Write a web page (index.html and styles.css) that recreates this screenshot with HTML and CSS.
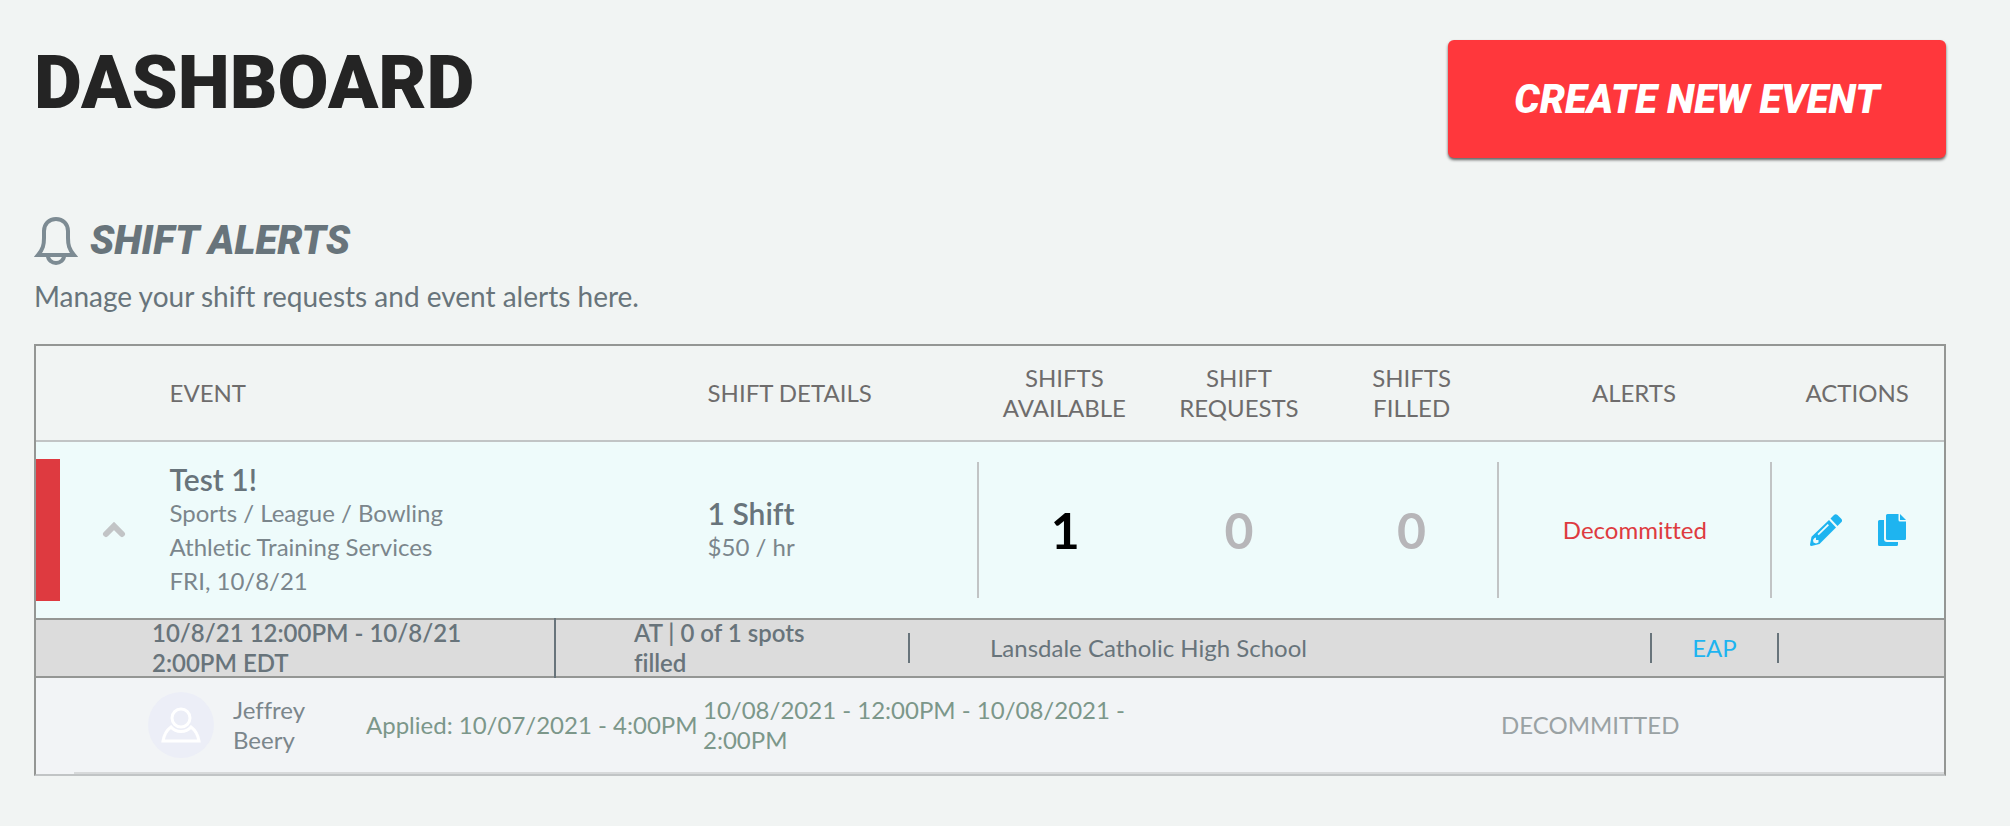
FILE: index.html
```
<!DOCTYPE html>
<html lang="en">
<head>
  <meta charset="UTF-8" />
  <title>Dashboard</title>
  <link rel="stylesheet" href="styles.css">
</head>
<body>
  <div class="page">
    <header class="page-header">
      <h1>DASHBOARD</h1>
      <button class="create-btn" type="button">CREATE NEW EVENT</button>
    </header>

    <section class="alerts">
      <h2>
        <svg class="bell" viewBox="0 0 44 48" fill="none" stroke="#7d8b93" stroke-width="4">
          <path d="M4 38 C9 32 10 28 10 21 V14 C10 7 15 2 22 2 S34 7 34 14 V21 C34 28 35 32 40 38 Z" />
          <path d="M14 39 C14 43 18 46 22 46 S30 43 30 39" />
        </svg>
        SHIFT ALERTS
      </h2>
      <p class="intro">Manage your shift requests and event alerts here.</p>

      <table class="shifts">
        <colgroup>
          <col class="col-toggle"><col class="col-event"><col class="col-details">
          <col class="col-available"><col class="col-requests"><col class="col-filled">
          <col class="col-alerts"><col class="col-actions">
        </colgroup>
        <thead>
          <tr>
            <th></th>
            <th class="left">EVENT</th>
            <th class="left">SHIFT DETAILS</th>
            <th>SHIFTS<br>AVAILABLE</th>
            <th>SHIFT<br>REQUESTS</th>
            <th>SHIFTS<br>FILLED</th>
            <th>ALERTS</th>
            <th>ACTIONS</th>
          </tr>
        </thead>
        <tbody>
          <tr class="event-row">
            <td>
              <div class="flag-cell">
                <span class="flag"></span>
                <button class="icon-btn toggle" type="button" aria-label="Collapse">
                  <svg width="24" height="16" viewBox="0 0 24 16" fill="none" stroke="#c2c4c6" stroke-width="6" stroke-linecap="round"><path d="M4 12 L12 4 L20 12" /></svg>
                </button>
              </div>
            </td>
            <td class="left">
              <div class="title">Test 1!</div>
              <div>Sports / League / Bowling</div>
              <div>Athletic Training Services</div>
              <div>FRI, 10/8/21</div>
            </td>
            <td class="left">
              <div class="title">1 Shift</div>
              <div>$50 / hr</div>
            </td>
            <td><div class="cell divided count has-shifts">1</div></td>
            <td><div class="cell count">0</div></td>
            <td><div class="cell count">0</div></td>
            <td><div class="cell divided alert">Decommitted</div></td>
            <td>
              <div class="cell divided actions">
                <button class="icon-btn" type="button" aria-label="Edit">
                  <svg width="32" height="32" viewBox="0 0 32 32" fill="#1eb4f0">
                    <path d="M20.500 4.500 L24 1 Q25.500 -.5 27.500 1 L31 4.500 Q33 6.500 31.500 8 L27.500 12 Z" />
                    <path fill-rule="evenodd" d="M19 6 L26 13.500 L9.500 30 L1.500 32 Q0 32 0 30.500 L1.500 22.800 Z M7.500 20 L8.700 21.200 L19 11.300 L17.700 10 Z M4.500 24 L3 26 L3.500 28.500 L6 29.500 L8.500 28.500 V26 H6 V23.500 Z" />
                  </svg>
                </button>
                <button class="icon-btn" type="button" aria-label="Copy">
                  <svg width="28" height="32" viewBox="0 0 28 32" fill="#1eb4f0">
                    <path d="M9.500 0 H20.500 V6 Q20.500 7.500 22 7.500 H28 V24.500 Q28 26 26.500 26 H9.500 Q8 26 8 24.500 V1.500 Q8 0 9.500 0 Z" />
                    <path d="M22 0 L28 6 H22 Z" />
                    <path d="M6 6 H1.500 Q0 6 0 7.500 V30.500 Q0 32 1.500 32 H18.500 Q20 32 20 30.500 V28 H9 Q6 28 6 25 Z" />
                  </svg>
                </button>
              </div>
            </td>
          </tr>
          <tr class="slot-row">
            <td colspan="8">
              <div class="slot">
                <div class="slot-time">10/8/21 12:00PM - 10/8/21 2:00PM EDT</div>
                <div class="slot-spots"><span>AT | 0 of 1 spots filled</span></div>
                <div class="slot-venue">Lansdale Catholic High School</div>
                <div class="slot-eap"><a href="#">EAP</a></div>
              </div>
            </td>
          </tr>
          <tr class="applicant-row">
            <td colspan="8">
              <div class="applicant">
                <div class="avatar">
                  <svg width="40" height="36" viewBox="0 0 40 36" fill="none" stroke="#fff" stroke-width="3">
                    <circle cx="20" cy="11" r="9" />
                    <path d="M10 20 C6 23 3 28 2 34 H38 C37 28 34 23 30 20 C25 26 15 26 10 20 Z" />
                  </svg>
                </div>
                <div class="name">Jeffrey Beery</div>
                <div class="applied">Applied: 10/07/2021 - 4:00PM</div>
                <div class="period">10/08/2021 - 12:00PM - 10/08/2021 - 2:00PM</div>
                <div class="state">DECOMMITTED</div>
              </div>
            </td>
          </tr>
        </tbody>
      </table>
    </section>
  </div>
</body>
</html>
```
FILE: styles.css
```
* { box-sizing: border-box; }
body {
  margin: 0;
  background: #f1f4f3;
  color: #7b868c;
  font-family: Lato, "Liberation Sans", sans-serif;
  font-size: 24px;
  line-height: 30px;
  font-variant-ligatures: none;
}
.page { padding: 40px 64px 40px 34px; }
.page-header {
  display: flex;
  justify-content: space-between;
  align-items: flex-start;
}
h1, h2, .create-btn {
  font-family: Roboto, "Liberation Sans", sans-serif;
  font-weight: 900;
}
h1 {
  margin: 0;
  color: #242424;
  font-size: 74px;
  line-height: 86px;
}
.create-btn {
  width: 498px;
  height: 118px;
  border: none;
  border-radius: 6px;
  background: #ff373c;
  color: #fff;
  font-size: 40px;
  font-style: italic;
  box-shadow: 0 2px 3px rgba(0,0,0,0.6);
  cursor: pointer;
}
h2 {
  display: flex;
  align-items: center;
  gap: 12px;
  margin: 58px 0 0 0;
  color: #68747b;
  font-size: 40px;
  font-style: italic;
  line-height: 50px;
}
.bell { width: 44px; height: 48px; }
.intro {
  margin: 10px 0 28px 0;
  color: #68747b;
  font-size: 28px;
  line-height: 40px;
}

/* Shift table */
.shifts {
  width: 100%;
  table-layout: fixed;
  border-collapse: separate;
  border-spacing: 0;
  border: 2px solid #949694;
  border-bottom-color: #c1c4c5;
}
.col-toggle { width: 7%; }
.col-event { width: 28.2%; }
.col-details { width: 14.1%; }
.col-available { width: 9.2%; }
.col-requests { width: 9.1%; }
.col-filled { width: 9%; }
.col-alerts { width: 14.3%; }
.col-actions { width: 9.1%; }
th, td { padding: 0; text-align: center; }
.left { text-align: left; }
th {
  height: 96px;
  border-bottom: 2px solid #c1c4c5;
  color: #6e6c6c;
  font-weight: normal;
}
.event-row { background: #eefbfb; line-height: 34px; }
.event-row td { height: 176px; }
.flag-cell { display: flex; align-items: center; }
.flag { width: 24px; height: 142px; background: #de3a40; }
.icon-btn {
  display: flex;
  padding: 0;
  border: none;
  background: none;
  cursor: pointer;
}
.toggle { margin-left: 42px; }
.title { color: #68747b; font-size: 30px; font-weight: 600; }
.cell {
  display: flex;
  align-items: center;
  justify-content: center;
  height: 136px;
}
.divided { border-left: 2px solid #c1c4c5; }
.count { color: #b7b6b9; font-size: 50px; font-weight: bold; }
.has-shifts { color: #000; }
.alert { color: #de3a40; }
.actions { gap: 36px; }

/* Expanded shift */
.slot {
  display: grid;
  grid-template-columns: 520fr 354fr 742fr 127fr 165fr;
  align-items: center;
  height: 60px;
  background: #dcdcdc;
  border-top: 2px solid #949694;
  border-bottom: 2px solid #949694;
  color: #68747b;
  text-align: left;
}
.slot-time, .slot-spots { font-weight: 600; }
.slot-time {
  margin: -2px 0;
  padding: 0 80px 0 116px;
  border-right: 2px solid #68747b;
}
.slot-spots {
  display: flex;
  align-items: center;
  height: 30px;
  padding: 0 80px 0 78px;
  border-right: 2px solid #68747b;
}
.slot-venue { padding-left: 80px; border-right: 2px solid #68747b; }
.slot-eap { text-align: center; border-right: 2px solid #68747b; }
a { color: #1eb4f0; text-decoration: none; }

/* Applicant */
.applicant-row { background: #f2f4f6; }
.applicant {
  display: grid;
  grid-template-columns: 85fr 133fr 337fr 798fr 443fr;
  align-items: center;
  height: 96px;
  margin-left: 38px;
  padding-left: 74px;
  border-bottom: 2px solid #d7d9da;
  text-align: left;
}
.avatar {
  display: flex;
  align-items: center;
  justify-content: center;
  width: 66px;
  height: 66px;
  border-radius: 50%;
  background: #eceef7;
}
.name { padding-right: 50px; }
.applied, .period { color: #7c978a; }
.applied { white-space: nowrap; }
.period { padding-right: 370px; }
.state { color: #9aa2a4; }
```
